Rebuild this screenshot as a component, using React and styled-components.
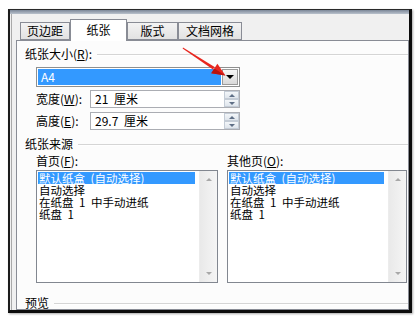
import React from 'react';
import styled, { createGlobalStyle } from 'styled-components';

const GlobalStyle = createGlobalStyle`
  html, body {
    margin: 0;
    padding: 0;
    background: #fff;
  }
  body {
    font-family: "Noto Sans CJK SC", "Liberation Sans", sans-serif;
    font-size: 12px;
    color: #000;
  }
`;

const Page = styled.div`
  position: relative;
  width: 418px;
  height: 318px;
  padding: 9px 0 0 8px;
  box-sizing: border-box;
  overflow: hidden;
`;

const Frame = styled.div`
  width: 404px;
  height: 304px;
  box-sizing: border-box;
  border-left: 2px solid #1c1c1c;
  border-top: 1px solid #2a2a2a;
  border-right: 3px solid #0c0c0c;
  border-bottom: 3px solid #0c0c0c;
  box-shadow: 1px 1px 2px rgba(0, 0, 0, 0.35);
  background: #f0f0f0;
  display: flex;
  flex-direction: column;
  overflow: hidden;
`;

const TitleStrip = styled.div`
  height: 4px;
  flex: none;
  background: linear-gradient(180deg, #7c8798, #b9c1cc);
`;

const Dialog = styled.div`
  flex: 1;
  min-height: 0;
  margin-left: 1px;
  border-left: 1px solid #a9a9a9;
  padding: 5px 0 0 4px;
  display: flex;
  flex-direction: column;
`;

const TabStrip = styled.div`
  display: flex;
  align-items: flex-end;
  height: 21px;
  padding-left: 4px;
  position: relative;
  z-index: 1;
`;

const Tab = styled.div`
  width: ${p => p.$w}px;
  height: ${p => (p.$active ? 22 : 18)}px;
  margin-bottom: ${p => (p.$active ? -1 : 0)}px;
  box-sizing: border-box;
  border: 1px solid #898c95;
  border-bottom: ${p => (p.$active ? 'none' : '1px solid #898c95')};
  background: ${p => (p.$active ? '#fff' : 'linear-gradient(180deg, #f3f3f3, #e2e2e2)')};
  display: flex;
  align-items: center;
  justify-content: center;
  line-height: 12px;
  padding-bottom: ${p => (p.$active ? 2 : 0)}px;
`;

const Panel = styled.div`
  flex: 1;
  border: 1px solid #898c95;
  background: #fcfcfc;
  padding: 7px 0 0 8px;
  display: flex;
  flex-direction: column;
`;

const GroupHeader = styled.div`
  display: flex;
  align-items: center;
  gap: 5px;
  height: 12px;
  line-height: 12px;
  margin-top: ${p => p.$top || 0}px;
  white-space: nowrap;

  &::after {
    content: '';
    flex: 1;
    height: 0;
    border-top: 1px solid #d5d5d5;
    box-shadow: 0 1px 0 #fff;
  }
`;

const Indent = styled.div`
  margin-left: 11px;
  display: flex;
  flex-direction: column;
`;

const ComboBox = styled.div`
  margin-top: 7px;
  width: 204px;
  height: 20px;
  box-sizing: border-box;
  border: 1px solid #8e8f8f;
  background: #fff;
  padding: 1px;
  display: flex;
`;

const ComboValue = styled.div`
  flex: 1;
  background: #3399ff;
  color: #fff;
  line-height: 16px;
  padding-left: 3px;
`;

const ComboButton = styled.div`
  width: 16px;
  margin-left: 1px;
  box-sizing: border-box;
  border: 1px solid #9a9a9a;
  background: linear-gradient(180deg, #f6f6f6, #d9d9d9);
  display: flex;
  align-items: center;
  justify-content: center;

  &::before {
    content: '';
    border-left: 4px solid transparent;
    border-right: 4px solid transparent;
    border-top: 4px solid #000;
  }
`;

const FieldRow = styled.div`
  display: flex;
  align-items: center;
  margin-top: ${p => p.$top}px;
  height: 18px;
`;

const FieldLabel = styled.div`
  width: 54px;
  line-height: 12px;
  white-space: nowrap;
`;

const SpinBox = styled.div`
  width: 150px;
  height: 18px;
  box-sizing: border-box;
  border: 1px solid #abadb3;
  background: #fff;
  display: flex;
`;

const SpinValue = styled.div`
  flex: 1;
  line-height: 16px;
  padding-left: 4px;
  white-space: pre;
  word-spacing: 3px;
`;

const SpinButtons = styled.div`
  width: 15px;
  display: flex;
  flex-direction: column;
`;

const SpinHalf = styled.div`
  flex: 1;
  box-sizing: border-box;
  border: 1px solid #c4ccd6;
  background: linear-gradient(180deg, #f3f6f9, #dfe5ec);
  display: flex;
  align-items: center;
  justify-content: center;

  &::before {
    content: '';
    border-left: 3px solid transparent;
    border-right: 3px solid transparent;
    ${p => (p.$up ? 'border-bottom: 3px solid #5f6f86;' : 'border-top: 3px solid #5f6f86;')}
  }
`;

const SourceGrid = styled.div`
  display: grid;
  grid-template-columns: 182px 180px;
  column-gap: 9px;
  margin-top: 5px;
`;

const SourceColumn = styled.div`
  display: flex;
  flex-direction: column;
`;

const ColumnLabel = styled.div`
  line-height: 12px;
  height: 12px;
  white-space: nowrap;
`;

const ListBox = styled.div`
  margin-top: 3px;
  height: 113px;
  box-sizing: border-box;
  border: 1px solid #828790;
  background: #fff;
  display: flex;
`;

const ListItems = styled.div`
  flex: 1;
  padding: 1px 4px 0 1px;
`;

const ListItem = styled.div`
  height: 12px;
  line-height: 12px;
  font-size: 11.5px;
  padding-left: 1px;
  white-space: pre;
  word-spacing: 3px;
  background: ${p => (p.$selected ? '#3399ff' : 'transparent')};
  color: ${p => (p.$selected ? '#fff' : '#000')};
`;

const ScrollBar = styled.div`
  width: 17px;
  background: linear-gradient(90deg, #e9e9e9, #f5f5f5);
  border-left: 1px solid #ececec;
  display: flex;
  flex-direction: column;
  justify-content: space-between;
`;

const ScrollArrow = styled.div`
  height: 17px;
  display: flex;
  align-items: center;
  justify-content: center;

  &::before {
    content: '';
    border-left: 3px solid transparent;
    border-right: 3px solid transparent;
    ${p => (p.$up ? 'border-bottom: 3px solid #a8a8a8;' : 'border-top: 3px solid #a8a8a8;')}
  }
`;

const ArrowOverlay = styled.svg`
  position: absolute;
  left: 0;
  top: 0;
  pointer-events: none;
`;

const tabs = [
  { label: '页边距', w: 50 },
  { label: '纸张', w: 57, active: true },
  { label: '版式', w: 51 },
  { label: '文档网格', w: 64 },
];

const trays = ['默认纸盒 (自动选择)', '自动选择', '在纸盘 1 中手动进纸', '纸盘 1'];

function TrayList() {
  return (
    <ListBox>
      <ListItems>
        {trays.map((t, i) => (
          <ListItem key={t} $selected={i === 0}>{t}</ListItem>
        ))}
      </ListItems>
      <ScrollBar>
        <ScrollArrow $up />
        <ScrollArrow />
      </ScrollBar>
    </ListBox>
  );
}

function Spin({ label, accel, value, top }) {
  return (
    <FieldRow $top={top}>
      <FieldLabel>
        {label}(<u>{accel}</u>):
      </FieldLabel>
      <SpinBox>
        <SpinValue>{value}</SpinValue>
        <SpinButtons>
          <SpinHalf $up />
          <SpinHalf />
        </SpinButtons>
      </SpinBox>
    </FieldRow>
  );
}

export default function App() {
  return (
    <>
      <GlobalStyle />
      <Page>
        <Frame>
          <TitleStrip />
          <Dialog>
            <TabStrip>
              {tabs.map(t => (
                <Tab key={t.label} $w={t.w} $active={t.active}>{t.label}</Tab>
              ))}
            </TabStrip>
            <Panel>
              <GroupHeader>
                <span>纸张大小(<u>R</u>):</span>
              </GroupHeader>
              <Indent>
                <ComboBox>
                  <ComboValue>A4</ComboValue>
                  <ComboButton />
                </ComboBox>
                <Spin label="宽度" accel="W" value="21 厘米" top={3} />
                <Spin label="高度" accel="E" value="29.7 厘米" top={4} />
              </Indent>
              <GroupHeader $top={8}>
                <span>纸张来源</span>
              </GroupHeader>
              <Indent>
                <SourceGrid>
                  <SourceColumn>
                    <ColumnLabel>首页(<u>F</u>):</ColumnLabel>
                    <TrayList />
                  </SourceColumn>
                  <SourceColumn>
                    <ColumnLabel>其他页(<u>O</u>):</ColumnLabel>
                    <TrayList />
                  </SourceColumn>
                </SourceGrid>
              </Indent>
              <GroupHeader $top={14}>
                <span>预览</span>
              </GroupHeader>
            </Panel>
          </Dialog>
        </Frame>
        <ArrowOverlay width="418" height="318" viewBox="0 0 418 318">
          <polygon points="183,47.5 214.6,67.0 213.0,69.6 182.6,48.4" fill="#e8261e" />
          <polygon points="225.5,75.5 211.2,73.2 217.4,63.8" fill="#e8261e" />
          <polygon points="225.5,75.5 211.2,73.2 214.3,68.5" fill="#b81410" />
        </ArrowOverlay>
      </Page>
    </>
  );
}
